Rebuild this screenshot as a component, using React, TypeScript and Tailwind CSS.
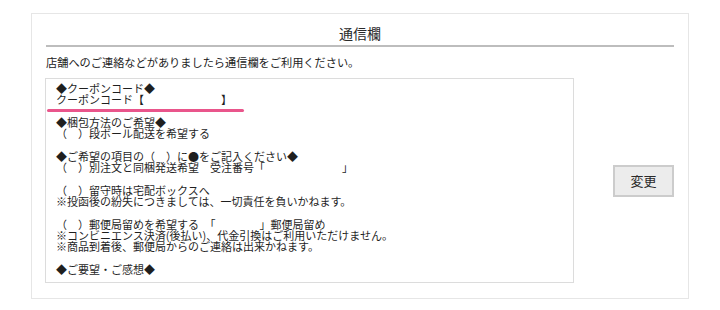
import React from "react";

const lines: string[] = [
  "◆クーポンコード◆",
  "クーポンコード【　　　　　　　】",
  "",
  "◆梱包方法のご希望◆",
  "（　）段ボール配送を希望する",
  "",
  "◆ご希望の項目の（　）に●をご記入ください◆",
  "（　）別注文と同梱発送希望　受注番号「　　　　　　　」",
  "",
  "（　）留守時は宅配ボックスへ",
  "※投函後の紛失につきましては、一切責任を負いかねます。",
  "",
  "（　）郵便局留めを希望する　「　　　　」郵便局留め",
  "※コンビニエンス決済(後払い)、代金引換はご利用いただけません。",
  "※商品到着後、郵便局からのご連絡は出来かねます。",
  "",
  "◆ご要望・ご感想◆",
];

export default function App() {
  return (
    <div
      className="w-[720px] h-[310px] bg-white pt-[13px] pl-[31px] text-[#222]"
      style={{ fontFamily: '"Noto Sans CJK JP", "Noto Sans", sans-serif' }}
    >
      <div className="w-[658px] h-[286px] border border-[#e6e6e6] px-[14px]">
        <div className="pt-[9px] pb-[2px] border-b-2 border-[#bdbdbd] text-center text-[14px] leading-[20px] text-[#2a2a2a]">
          通信欄
        </div>
        <div className="mt-[7px] text-[11.2px] leading-[16px] text-[#222]">
          店舗へのご連絡などがありましたら通信欄をご利用ください。
        </div>
        <div className="mt-[8px] flex items-center">
          <div className="relative -ml-px w-[529px] h-[205px] border border-[#dcdcdc] bg-white pl-[10px] pt-[4px]">
            {lines.map((l, i) => (
              <div key={i} className="whitespace-pre text-[11px] leading-[11.3px] h-[11.3px] text-[#1f1f1f]">
                {l}
              </div>
            ))}
            <div className="absolute left-[1px] top-[30px] w-[197px] h-[3px] rounded-full bg-[#e9558b]" />
          </div>
          <button className="ml-auto w-[61px] h-[32px] border-2 border-[#cccccc] bg-[#ececec] text-[13px] text-[#2a2a2a] leading-none">
            変更
          </button>
        </div>
      </div>
    </div>
  );
}
